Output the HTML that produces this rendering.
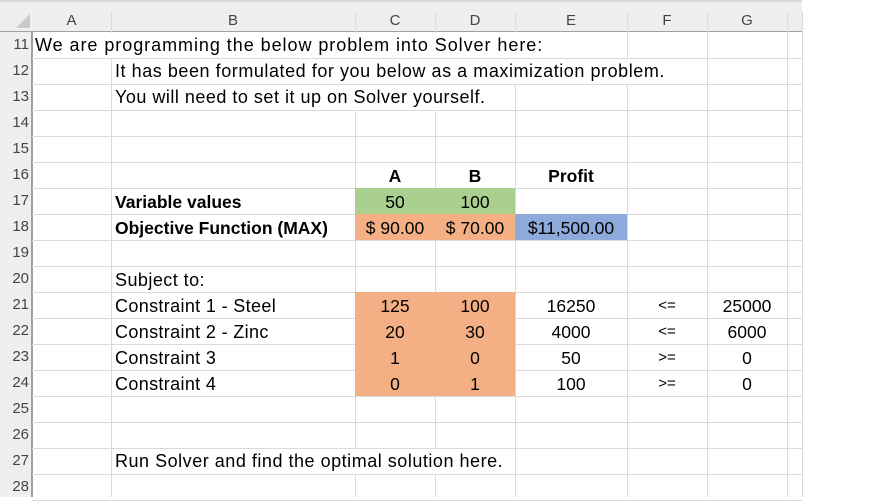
<!DOCTYPE html>
<html><head><meta charset="utf-8"><style>
body{margin:0;width:891px;height:497px;background:#fff;overflow:hidden;position:relative;font-family:"Liberation Sans",sans-serif}
.a{position:absolute;box-sizing:border-box}
.vl{position:absolute;width:1px;background:#dadada}
.hl{position:absolute;height:1px;background:#dadada}
.t{position:absolute;font-size:17.5px;color:#000;white-space:nowrap;line-height:26px}
.w{background:#fff;height:25px;line-height:25px;font-size:18px}
.rn{position:absolute;left:0;width:29px;text-align:right;font-size:15px;color:#444;line-height:26px}
.ch{position:absolute;top:10px;font-size:15px;color:#444;text-align:center;line-height:22px}
</style></head><body>
<div class="a" style="left:0;top:0;width:802px;height:32px;background:#efefef;border-bottom:1px solid #a0a0a0"></div>
<div class="a" style="left:0;top:0;width:802px;height:2px;background:#d8d8d8"></div>
<div class="a" style="left:0;top:32px;width:32px;height:465px;background:#efefef;border-right:1px solid #a0a0a0"></div>
<svg class="a" style="left:16px;top:14px" width="14" height="14"><polygon points="14,0 14,14 0,14" fill="#c8c8c8"/></svg>
<div id="g"></div>
<script>
var cols=[32,111,355,435,515,627,707,787,802],names=["A","B","C","D","E","F","G",""];
var h="";
for(var i=0;i<cols.length;i++){h+='<div class="vl" style="left:'+cols[i]+'px;top:'+(i==0?32:12)+'px;height:'+(i==0?465:485)+'px;background:'+(i==0?'#a0a0a0':'#dadada')+'"></div>';}
for(var i=0;i<7;i++){h+='<div class="ch" style="left:'+cols[i]+'px;width:'+(cols[i+1]-cols[i])+'px">'+names[i]+'</div>';}
for(var r=11;r<=28;r++){var y=32+(r-11)*26;h+='<div class="hl" style="left:32px;width:770px;top:'+(y+26)+'px"></div>';h+='<div class="rn" style="top:'+y+'px">'+r+'</div>';}
document.getElementById('g').innerHTML=h;
</script>
<div class="a" style="left:355px;top:188px;width:160px;height:26px;background:#a9d08e"></div>
<div class="a" style="left:355px;top:214px;width:160px;height:26px;background:#f4b084"></div>
<div class="a" style="left:515px;top:214px;width:112px;height:26px;background:#8ea9db"></div>
<div class="a" style="left:355px;top:292px;width:160px;height:104px;background:#f4b084"></div>
<div class="t w" style="left:33px;padding-left:2px;top:33px;letter-spacing:0.95px">We are programming the below problem into Solver here:</div>
<div class="t w" style="left:112px;padding-left:3px;top:59px;letter-spacing:0.55px">It has been formulated for you below as a maximization problem.</div>
<div class="t w" style="left:112px;padding-left:3px;top:85px;letter-spacing:0.5px">You will need to set it up on Solver yourself.</div>
<div class="t" style="left:115px;top:189px;font-weight:bold">Variable values</div>
<div class="t" style="left:115px;top:215px;font-weight:bold">Objective Function (MAX)</div>
<div class="t" style="left:115px;top:267px;font-size:18px;letter-spacing:0.45px">Subject to:</div>
<div class="t" style="left:115px;top:293px;font-size:18px;letter-spacing:0.35px">Constraint 1 - Steel</div>
<div class="t" style="left:115px;top:319px;font-size:18px;letter-spacing:0.35px">Constraint 2 - Zinc</div>
<div class="t" style="left:115px;top:345px;font-size:18px;letter-spacing:0.35px">Constraint 3</div>
<div class="t" style="left:115px;top:371px;font-size:18px;letter-spacing:0.35px">Constraint 4</div>
<div class="t w" style="left:112px;padding-left:3px;top:449px;letter-spacing:0.52px">Run Solver and find the optimal solution here.</div>
<div id="n"></div>
<script>
var d=[[163,355,80,"A",1],[163,435,80,"B",1],[163,515,112,"Profit",1],
[189,355,80,"50"],[189,435,80,"100"],
[215,355,80,"$ 90.00"],[215,435,80,"$ 70.00"],[215,515,112,"$11,500.00"],
[293,355,80,"125"],[293,435,80,"100"],[293,515,112,"16250"],[293,627,80,"&lt;="],[293,707,80,"25000"],
[319,355,80,"20"],[319,435,80,"30"],[319,515,112,"4000"],[319,627,80,"&lt;="],[319,707,80,"6000"],
[345,355,80,"1"],[345,435,80,"0"],[345,515,112,"50"],[345,627,80,"&gt;="],[345,707,80,"0"],
[371,355,80,"0"],[371,435,80,"1"],[371,515,112,"100"],[371,627,80,"&gt;="],[371,707,80,"0"]];
var s="";d.forEach(function(e){s+='<div class="t" style="top:'+e[0]+'px;left:'+e[1]+'px;width:'+e[2]+'px;text-align:center;'+(e[3].indexOf("&")==0?'font-size:15px;':'')+(e[4]?'font-weight:bold':'')+'">'+e[3]+'</div>';});
document.getElementById('n').innerHTML=s;
</script>
</body></html>
